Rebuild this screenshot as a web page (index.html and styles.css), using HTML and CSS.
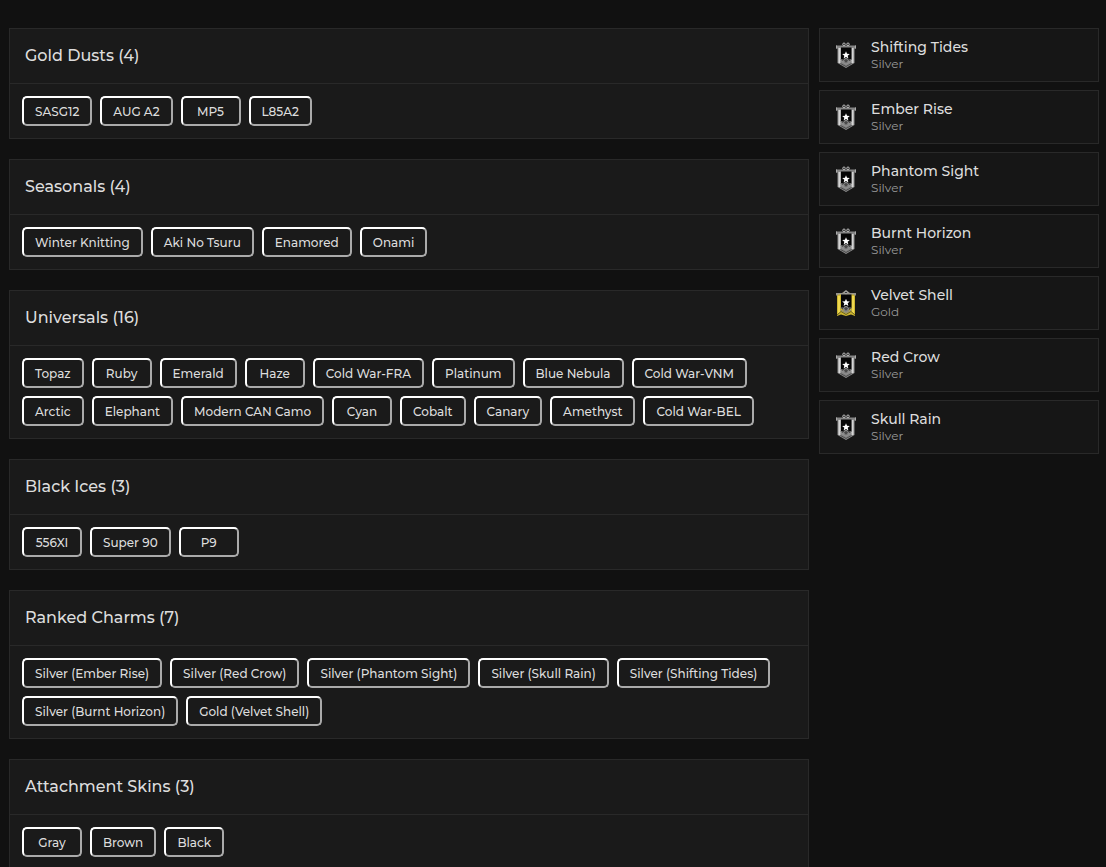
FILE: index.html
```html
<!DOCTYPE html>
<html lang="en">
<head>
<meta charset="utf-8">
<meta name="viewport" content="width=device-width, initial-scale=1">
<title>Inventory</title>
<link rel="stylesheet" href="styles.css">
</head>
<body>
<svg class="sprite" aria-hidden="true">
  <symbol id="star" viewBox="0 0 10 10"><path d="M5 .3 6.3 3.5 9.8 3.8 7.1 6 8 9.4 5 7.6 2 9.4 2.9 6 .2 3.8 3.7 3.5Z"/></symbol>
  <symbol id="silver" viewBox="0 0 20 26">
    <path d="M1.500 5H18.500V21L10 26 1.500 21Z" fill="#8f8f8f"/>
    <path d="M3.500 6V21M16.500 6V21" stroke="#d6d6d6" stroke-width="2"/>
    <path d="M5 5H15.500V17.500L10 21 5 17.500Z" fill="#050505"/>
    <path d="M0 3.500H20V6.500H18V5.500H2V6.500H0Z" fill="#858585"/>
    <path d="M.500 3.500V6.500M19.500 3.500V6.500" stroke="#aaa"/>
    <circle cx="8" cy="2.300" r="1.300" fill="#222" stroke="#c4c4c4" stroke-width=".9"/>
    <circle cx="12" cy="2.300" r="1.300" fill="#222" stroke="#c4c4c4" stroke-width=".9"/>
    <circle cx="10" cy="19" r="2.500" fill="#4a4a4a" stroke="#999"/>
    <path d="M4.500 17.500 7 18 10 21.500 13 18 15.500 17.500M4.500 20 10 23.500 15.500 20" fill="none" stroke="#808080"/>
    <path d="M4.500 21.500 10 24.500 15.500 21.500" fill="none" stroke="#333" stroke-width=".8"/>
    <use href="#star" x="6" y="9" width="8" height="8" fill="#fff"/>
  </symbol>
  <symbol id="gold" viewBox="0 0 20 26">
    <path d="M1 4H19V26L15 24.500 10 26 5 24.500 1 26Z" fill="#cdb62f"/>
    <path d="M3 6V23M17 6V23" stroke="#efd84f" stroke-width="2"/>
    <path d="M5 4H15.500V18L10 22 5 18Z" fill="#050505"/>
    <path d="M0 3H6L10 0 14 3H20V5.500H18V4.500H2V5.500H0Z" fill="#96938a"/>
    <circle cx="10" cy="2.500" r="1.300" fill="#222" stroke="#bbb" stroke-width=".8"/>
    <circle cx="10" cy="19" r="2.500" fill="#4a4a4a" stroke="#999"/>
    <path d="M4.500 18 7 18 10 21.500 13 18 15.500 18M4.500 20 10 23 15.500 20" fill="none" stroke="#858585"/>
    <path d="M1 25 5 21.500 10 24.500 15 21.500 19 25" fill="none" stroke="#69601f"/>
    <use href="#star" x="6" y="8.500" width="8" height="8" fill="#fff"/>
  </symbol>
</svg>
<div class="page">
  <main class="groups">
    <section class="panel">
      <h2 class="panel-title">Gold Dusts (4)</h2>
      <div class="chips"><button class="chip">SASG12</button><button class="chip">AUG A2</button><button class="chip">MP5</button><button class="chip">L85A2</button></div>
    </section>
    <section class="panel">
      <h2 class="panel-title">Seasonals (4)</h2>
      <div class="chips"><button class="chip">Winter Knitting</button><button class="chip">Aki No Tsuru</button><button class="chip">Enamored</button><button class="chip">Onami</button></div>
    </section>
    <section class="panel">
      <h2 class="panel-title">Universals (16)</h2>
      <div class="chips"><button class="chip">Topaz</button><button class="chip">Ruby</button><button class="chip">Emerald</button><button class="chip">Haze</button><button class="chip">Cold War-FRA</button><button class="chip">Platinum</button><button class="chip">Blue Nebula</button><button class="chip">Cold War-VNM</button><button class="chip">Arctic</button><button class="chip">Elephant</button><button class="chip">Modern CAN Camo</button><button class="chip">Cyan</button><button class="chip">Cobalt</button><button class="chip">Canary</button><button class="chip">Amethyst</button><button class="chip">Cold War-BEL</button></div>
    </section>
    <section class="panel">
      <h2 class="panel-title">Black Ices (3)</h2>
      <div class="chips"><button class="chip">556XI</button><button class="chip">Super 90</button><button class="chip">P9</button></div>
    </section>
    <section class="panel">
      <h2 class="panel-title">Ranked Charms (7)</h2>
      <div class="chips"><button class="chip">Silver (Ember Rise)</button><button class="chip">Silver (Red Crow)</button><button class="chip">Silver (Phantom Sight)</button><button class="chip">Silver (Skull Rain)</button><button class="chip">Silver (Shifting Tides)</button><button class="chip">Silver (Burnt Horizon)</button><button class="chip">Gold (Velvet Shell)</button></div>
    </section>
    <section class="panel">
      <h2 class="panel-title">Attachment Skins (3)</h2>
      <div class="chips"><button class="chip">Gray</button><button class="chip">Brown</button><button class="chip">Black</button></div>
    </section>
  </main>
  <aside class="seasons">
    <article class="season"><svg class="charm"><use href="#silver"/></svg><div><h3 class="season-name">Shifting Tides</h3><p class="season-rank">Silver</p></div></article>
    <article class="season"><svg class="charm"><use href="#silver"/></svg><div><h3 class="season-name">Ember Rise</h3><p class="season-rank">Silver</p></div></article>
    <article class="season"><svg class="charm"><use href="#silver"/></svg><div><h3 class="season-name">Phantom Sight</h3><p class="season-rank">Silver</p></div></article>
    <article class="season"><svg class="charm"><use href="#silver"/></svg><div><h3 class="season-name">Burnt Horizon</h3><p class="season-rank">Silver</p></div></article>
    <article class="season"><svg class="charm"><use href="#gold"/></svg><div><h3 class="season-name">Velvet Shell</h3><p class="season-rank">Gold</p></div></article>
    <article class="season"><svg class="charm"><use href="#silver"/></svg><div><h3 class="season-name">Red Crow</h3><p class="season-rank">Silver</p></div></article>
    <article class="season"><svg class="charm"><use href="#silver"/></svg><div><h3 class="season-name">Skull Rain</h3><p class="season-rank">Silver</p></div></article>
  </aside>
</div>
</body>
</html>
```
FILE: styles.css
```css
* { box-sizing: border-box; }
html { scrollbar-width: none; }
body { margin: 0; background: #111; color: #ddd; font-family: Montserrat, Inter, sans-serif; }
h2, h3, p { margin: 0; }
.sprite { display: none; }
.page { display: grid; grid-template-columns: minmax(0, 1fr) 280px; gap: 10px; align-items: start; padding: 28px 7px 20px 9px; }
.groups { display: flex; flex-direction: column; gap: 20px; }
.panel { background: #1a1a1a; border: 1px solid #292929; }
.panel-title { padding: 15px; border-bottom: 1px solid #292929; font-size: 16px; line-height: 24px; font-weight: 500; }
.chips { display: flex; flex-wrap: wrap; gap: 8px; padding: 12px; }
.chip { min-width: 60px; padding: 5px 11px 3px; border: 2px solid; border-color: #fff #aaa #aaa #fff; border-radius: 5px; background: transparent; color: #ddd; font-family: inherit; font-size: 12px; line-height: 18px; font-weight: 500; white-space: nowrap; }
.seasons { display: flex; flex-direction: column; gap: 8px; }
.season { display: flex; align-items: center; gap: 15px; padding: 9px 16px; background: #161616; border: 1px solid #292929; }
.charm { width: 20px; height: 26px; flex: none; }
.season-name { font-size: 14px; line-height: 18px; font-weight: 500; }
.season-rank { font-size: 12px; line-height: 16px; color: #999; }
```
